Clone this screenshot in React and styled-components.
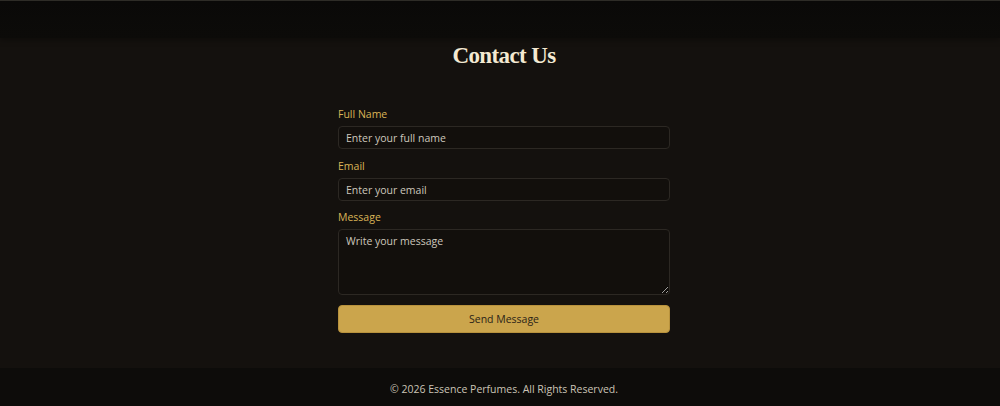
import React from 'react';
import styled, { createGlobalStyle } from 'styled-components';

const GlobalStyle = createGlobalStyle`
  * { box-sizing: border-box; }
  html, body { margin: 0; padding: 0; background: #14110e; }
  body { font-family: "Open Sans", "Liberation Sans", sans-serif; }
`;

const Page = styled.div`
  width: 100%;
  min-height: 406px;
  display: flex;
  flex-direction: column;
  background: #14110e;
`;

const TopBand = styled.div`
  height: 38px;
  background: linear-gradient(#0a0908, #0c0b09);
  border-top: 1px solid #2e2c27;
  box-shadow: 0 2px 6px rgba(0, 0, 0, 0.35);
`;

const Section = styled.section`
  flex: 1;
  display: flex;
  flex-direction: column;
  align-items: center;
  padding: 2px 0 34px 8px;
`;

const Title = styled.h2`
  margin: 0 0 34px;
  font-family: "Liberation Serif", "DejaVu Serif", serif;
  font-weight: 700;
  font-size: 23px;
  letter-spacing: -0.6px;
  line-height: 32px;
  color: #f3e9d2;
`;

const Form = styled.form`
  width: 332px;
  display: flex;
  flex-direction: column;
`;

const Field = styled.div`
  display: flex;
  flex-direction: column;
  margin-bottom: ${p => p.$gap || 9}px;
`;

const Label = styled.label`
  font-size: 10.5px;
  line-height: 16px;
  color: #dab457;
  margin-bottom: 4px;
`;

const inputBase = `
  width: 100%;
  background: #120f0c;
  border: 1px solid #2c2823;
  border-radius: 4px;
  color: #e6e0d4;
  font-family: "Open Sans", "Liberation Sans", sans-serif;
  font-size: 10.5px;
  padding: 0 7px;
  outline: none;
  &::placeholder { color: #cdc7bc; opacity: 1; }
`;

const Input = styled.input`
  ${inputBase}
  height: 23px;
`;

const TextArea = styled.textarea`
  ${inputBase}
  height: 66px;
  padding: 4px 7px;
  resize: vertical;
  display: block;
`;

const Button = styled.button`
  height: 28px;
  border: 1px solid #b8923d;
  border-radius: 4px;
  background: #cba54c;
  color: #2a2317;
  font-family: "Open Sans", "Liberation Sans", sans-serif;
  font-size: 10.5px;
  cursor: pointer;
`;

const Footer = styled.footer`
  height: 38px;
  background: #0d0c0a;
  display: flex;
  align-items: center;
  justify-content: center;
  padding: 3px 0 0 8px;
  font-size: 10.5px;
  color: #cbc4b6;
`;

export default function App() {
  return (
    <Page>
      <GlobalStyle />
      <TopBand />
      <Section>
        <Title>Contact Us</Title>
        <Form onSubmit={e => e.preventDefault()}>
          <Field>
            <Label>Full Name</Label>
            <Input type="text" placeholder="Enter your full name" />
          </Field>
          <Field $gap={8}>
            <Label>Email</Label>
            <Input type="email" placeholder="Enter your email" />
          </Field>
          <Field $gap={10}>
            <Label>Message</Label>
            <TextArea placeholder="Write your message" />
          </Field>
          <Button type="submit">Send Message</Button>
        </Form>
      </Section>
      <Footer>© 2026 Essence Perfumes. All Rights Reserved.</Footer>
    </Page>
  );
}
